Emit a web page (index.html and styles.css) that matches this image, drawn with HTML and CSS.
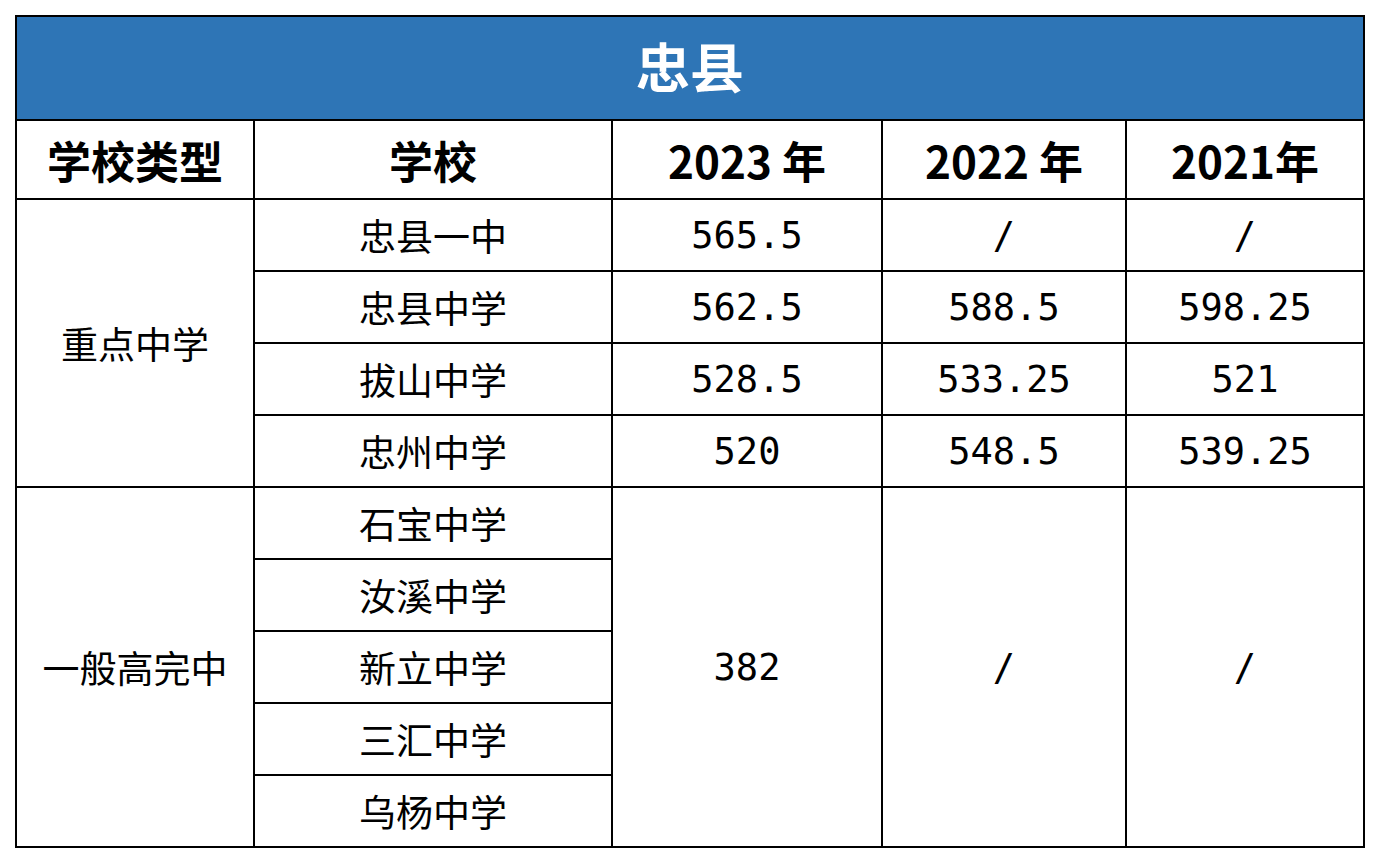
FILE: index.html
```html
<!DOCTYPE html>
<html lang="zh-CN">
<head>
<meta charset="utf-8">
<title>忠县</title>
<link rel="stylesheet" href="styles.css">
</head>
<body>
<table class="score-table">
  <colgroup>
    <col class="c-type">
    <col class="c-school">
    <col class="c-y23">
    <col class="c-y22">
    <col class="c-y21">
  </colgroup>
  <tr class="title-row"><td colspan="5" class="title">忠县</td></tr>
  <tr class="head-row">
    <td>学校类型</td><td>学校</td><td>2023 年</td><td>2022 年</td><td>2021年</td>
  </tr>
  <tr class="row">
    <td rowspan="4" class="cn">重点中学</td><td class="cn">忠县一中</td><td class="num">565.5</td><td class="num">/</td><td class="num">/</td>
  </tr>
  <tr class="row"><td class="cn">忠县中学</td><td class="num">562.5</td><td class="num">588.5</td><td class="num">598.25</td></tr>
  <tr class="row"><td class="cn">拔山中学</td><td class="num">528.5</td><td class="num">533.25</td><td class="num">521</td></tr>
  <tr class="row"><td class="cn">忠州中学</td><td class="num">520</td><td class="num">548.5</td><td class="num">539.25</td></tr>
  <tr class="row">
    <td rowspan="5" class="cn">一般高完中</td><td class="cn">石宝中学</td><td rowspan="5" class="num">382</td><td rowspan="5" class="num">/</td><td rowspan="5" class="num">/</td>
  </tr>
  <tr class="row"><td class="cn">汝溪中学</td></tr>
  <tr class="row"><td class="cn">新立中学</td></tr>
  <tr class="row"><td class="cn">三汇中学</td></tr>
  <tr class="row"><td class="cn">乌杨中学</td></tr>
</table>
</body>
</html>
```
FILE: styles.css
```css
html, body {
  margin: 0;
  padding: 0;
  background: #ffffff;
}
body {
  padding: 15px;
  font-family: "Noto Sans CJK SC", "Noto Sans", sans-serif;
  color: #000;
}
.score-table {
  border-collapse: separate;
  border-spacing: 0;
  table-layout: fixed;
  width: 1350px;
  border-left: 2px solid #000;
  border-top: 2px solid #000;
}
.c-type { width: 238px; }
.c-school { width: 358px; }
.c-y23 { width: 270px; }
.c-y22 { width: 244px; }
.c-y21 { width: 238px; }
.score-table td {
  border-right: 2px solid #000;
  border-bottom: 2px solid #000;
  padding: 0;
  text-align: center;
  vertical-align: middle;
  box-sizing: border-box;
}
.title-row td {
  height: 104px;
  padding-bottom: 4px;
  background: #2e75b6;
  color: #fff;
  font-weight: 700;
  font-size: 54px;
  line-height: 1;
}
.head-row td {
  height: 79px;
  font-weight: 700;
  font-size: 44px;
  line-height: 1;
}
.row td {
  height: 72px;
  font-size: 37px;
  line-height: 1;
}
.num {
  font-family: "DejaVu Sans Mono", "Liberation Mono", monospace;
  font-size: 36px;
}
```
